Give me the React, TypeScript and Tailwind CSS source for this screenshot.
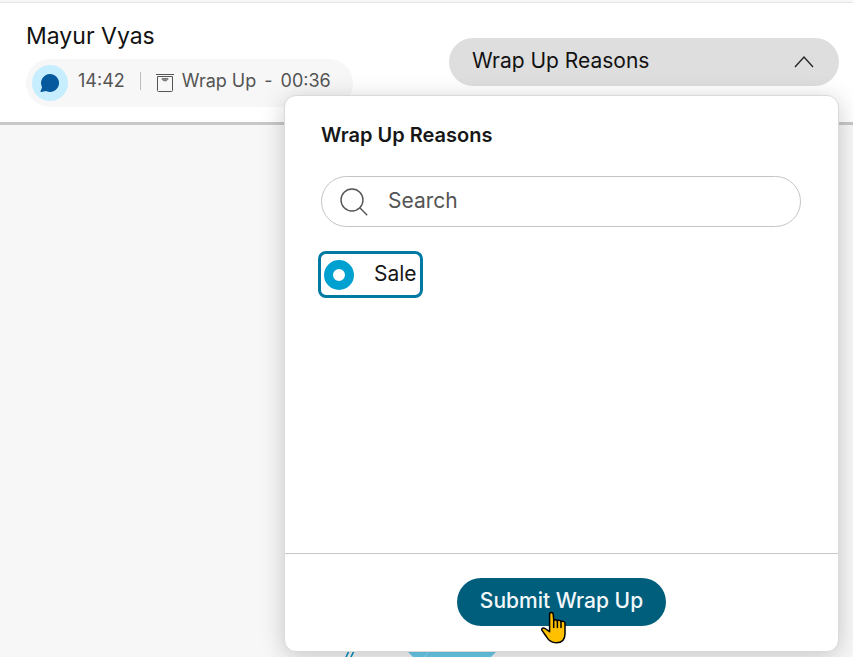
import { useState } from "react";

function ChatIcon() {
  return (
    <span className="flex size-9 items-center justify-center rounded-full bg-[#c7eeff]">
      <svg viewBox="0 0 20 20" className="size-5" fill="#05599c" aria-hidden="true">
        <path d="M10 1a9 9 0 1 1-3.9 17.1L1.1 19c-.5.1-.8-.3-.6-.8l1.6-3.9A9 9 0 0 1 10 1Z" />
      </svg>
    </span>
  );
}

function WrapUpIcon() {
  return (
    <svg viewBox="0 0 18 20" className="h-5 w-[18px]" fill="none" stroke="#545454" aria-hidden="true">
      <path d="M0 1.5h18M1.5 3.5h15v14a1 1 0 0 1-1 1h-13a1 1 0 0 1-1-1z" />
      <path d="M6 5.5h6c0 3.2-6 3.2-6 0Z" fill="#8a8a8a" stroke="#777" />
    </svg>
  );
}

function HandCursor() {
  return (
    <svg viewBox="0 0 26 34" className="pointer-events-none absolute top-[33px] left-[84px] h-[34px] w-[26px]" aria-hidden="true">
      <path
        d="M8.6 3.2c0-2.4 3.4-2.4 3.6 0l.6 6.5c.5-1.3 3-1.2 3.5.3.6-1.1 3-.8 3.5.6 1.3-.9 4.2-.3 4.2 1.9v10.2c0 6-3.6 9-8.7 9-5 0-8.1-2.8-10-6.2L1 19.4c-.9-2.3 1.4-3 3-1.9l4.6 3.2z"
        fill="#ffc000"
        stroke="#000"
        strokeWidth="1.5"
        strokeLinejoin="round"
      />
      <path d="M12.7 9v7.4M16.4 10.1v6.3M20 10.8v5.6" stroke="#000" strokeWidth="1.5" strokeLinecap="round" />
    </svg>
  );
}

function BackgroundArt() {
  return (
    <svg viewBox="0 0 152 6" className="absolute bottom-0 left-[345px] h-[6px] w-[152px]" aria-hidden="true">
      <path d="M1 6 4 0M6 6 9 0" stroke="#0891bf" strokeWidth="1.6" />
      <path d="M62 0h90l-6 6H68z" fill="#6bcdec" />
      <path d="M79 6l6-6" stroke="#92daef" />
    </svg>
  );
}

function WrapUpMenu() {
  const [reason, setReason] = useState("sale");
  return (
    <div className="absolute top-full right-0 z-10 mt-[9px] w-[555px] rounded-xl border border-[#dadada] bg-white text-[#171717] shadow-[0_4px_24px_rgba(0,0,0,0.2)]">
      <section className="min-h-[457px] pt-[23px] pr-[37px] pl-9">
        <h2 className="text-xl leading-8 font-semibold">Wrap Up Reasons</h2>
        <label className="mt-[25px] flex h-[51px] items-center gap-5 rounded-full border border-[#c4c4c4] px-[18px]">
          <svg viewBox="0 0 28 28" className="size-7" fill="none" stroke="#545454" strokeWidth="1.4" aria-hidden="true">
            <circle cx="12" cy="12" r="11" />
            <path d="m19.8 19.8 7.4 7.4" />
          </svg>
          <input
            type="text"
            aria-label="Search"
            placeholder="Search"
            className="min-w-0 flex-1 pb-[2px] text-[21px] leading-8 outline-none placeholder:text-[#545454]"
          />
        </label>
        <label className="mt-6 -ml-[3px] flex h-[47px] w-fit items-center gap-5 rounded-lg border-3 border-[#0079a3] px-[3px]">
          <input
            type="radio"
            name="reason"
            value="sale"
            checked={reason === "sale"}
            onChange={() => setReason("sale")}
            className="size-[30px] appearance-none rounded-full border border-[#00a0d1] checked:border-[9px]"
          />
          <span className="pb-[2px] text-[21px] leading-8">Sale</span>
        </label>
      </section>
      <footer className="flex justify-center border-t border-[#c8c8c8] pt-6 pb-[25px]">
        <div className="relative">
          <button type="button" className="h-12 rounded-full bg-[#005e7d] px-[23px] pb-[2px] text-[21px] leading-8 font-medium text-[#f2f7f9]">
            Submit Wrap Up
          </button>
          <HandCursor />
        </div>
      </footer>
    </div>
  );
}

export default function App() {
  const [open, setOpen] = useState(true);
  return (
    <div className="flex min-h-screen flex-col overflow-hidden bg-[#f7f7f7] font-['Inter','Liberation_Sans',sans-serif]">
      <header className="mt-[2px] flex items-start justify-between border-t border-b-3 border-t-[#e4e4e4] border-b-[#c8c8c8] bg-white pr-[14px] pb-[15px] pl-[26px]">
        <div className="pt-[17px]">
          <h1 className="text-[23px] leading-8 text-[#121212]">Mayur Vyas</h1>
          <div className="mt-[7px] flex h-12 w-[327px] items-center rounded-full bg-[#f7f7f7] pl-[6px] text-lg text-[#545454]">
            <ChatIcon />
            <span className="ml-[10px] pb-1">14:42</span>
            <span className="mx-[15px] mb-1 h-[18px] w-px bg-[#bdbdbd]" />
            <WrapUpIcon />
            <span className="ml-2 pb-1 whitespace-nowrap">Wrap Up</span>
            <span className="mx-2 pb-1">-</span>
            <span className="pb-1">00:36</span>
          </div>
        </div>
        <div className="relative mt-[35px]">
          <button
            type="button"
            aria-expanded={open}
            onClick={() => setOpen(!open)}
            className="flex h-12 w-[390px] items-center justify-between rounded-full bg-[#dedede] pr-[25px] pl-[23px] text-[21px] leading-8 text-[#121212]"
          >
            <span className="pb-[2px]">Wrap Up Reasons</span>
            <svg viewBox="0 0 20 12" className="h-3 w-5" fill="none" stroke="#222" strokeWidth="1.3" aria-hidden="true">
              <path d="m1 11 9-10 9 10" />
            </svg>
          </button>
          {open && <WrapUpMenu />}
        </div>
      </header>
      <main className="relative flex-1">
        <BackgroundArt />
      </main>
    </div>
  );
}
